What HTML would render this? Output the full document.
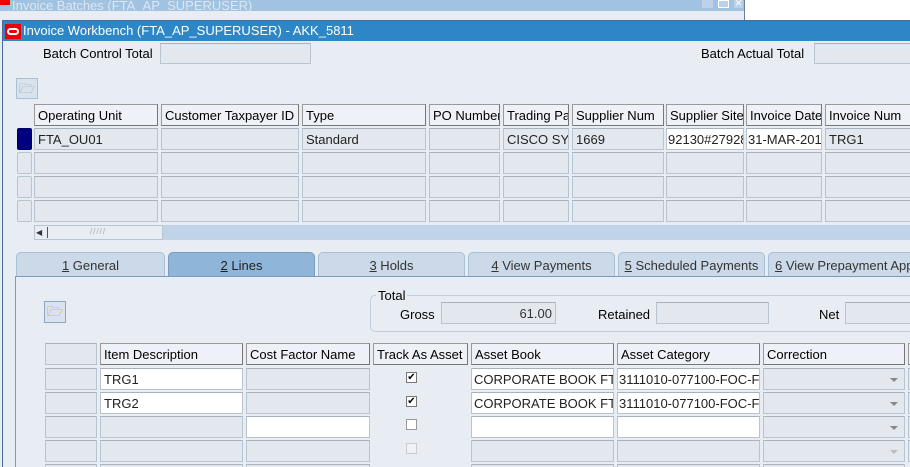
<!DOCTYPE html>
<html style="overflow:hidden;width:910px;height:467px"><head><style>
*{margin:0;padding:0;box-sizing:border-box}
body{width:910px;height:467px;overflow:hidden;background:#e8edf4;font-family:"Liberation Sans",sans-serif;font-size:13px;color:#000;position:relative}
div{position:absolute}
.h{background:#eef2f8;border:1px solid #9a9a9a;border-right-color:#777;border-bottom-color:#777;padding:3px 0 0 3px;white-space:nowrap;overflow:hidden;height:22px}
.f{background:#e3e8ef;border:1px solid #b8c4d0;border-top-color:#a7b2bd;height:22px;padding:3px 0 0 3px;white-space:nowrap;overflow:hidden;color:#222}
.w{background:#fff}
.tab{top:252px;height:24px;background:#cbd9e8;border:1px solid #a9bfd6;border-bottom:none;border-radius:5px 5px 0 0;text-align:center;padding-top:5px;color:#333;white-space:nowrap;overflow:hidden}
.ri{left:17px;width:15px;height:22px;border:1px solid #b8c4d0;background:#e3e8ef;border-radius:2px}
.cb{width:11px;height:11px;border:1px solid #777;background:#fff;font-size:10px;line-height:9px;text-align:center}
.dd{position:absolute;right:6px;top:9px;width:0;height:0;border-left:4px solid transparent;border-right:4px solid transparent;border-top:4px solid #888}
</style></head><body>
<div style="left:0;top:0;width:744px;height:11px;background:#a1c2e0;color:#dbe7f3;font-size:13px;line-height:11px;padding-left:12px;overflow:hidden">Invoice Batches (FTA_AP_SUPERUSER)</div>
<div style="left:0;top:0;width:10px;height:5px;background:#e00"></div>
<div style="left:744px;top:0;width:166px;height:20px;background:#fff;border-left:1px solid #6a7f99"></div>
<div style="left:702px;top:0;width:11px;height:8px;background:#bcd2e8"></div>
<div style="left:718px;top:0;width:11px;height:8px;background:#bcd2e8;border:1px solid #fff"></div>
<div style="left:734px;top:0;width:9px;height:8px;background:#bcd2e8;color:#fff;font-size:9px;line-height:7px;text-align:center">✕</div>
<div style="left:2px;top:20px;width:908px;height:447px;border-left:1px solid #4a6a99;border-top:1px solid #4a6a99"></div>
<div style="left:3px;top:21px;width:907px;height:20px;background:#2d86c5;color:#fff;font-size:13px;line-height:20px;padding-left:20px">Invoice Workbench (FTA_AP_SUPERUSER) - AKK_5811</div>
<div style="left:5px;top:24px;width:16px;height:15px;background:#e00;"><div style="left:2px;top:4px;width:12px;height:7px;border:2px solid #fff;border-radius:4px"></div></div>

<div style="left:43px;top:46px">Batch Control Total</div>
<div class="f" style="left:160px;top:43px;width:151px;height:21px"></div>
<div style="left:701px;top:46px">Batch Actual Total</div>
<div class="f" style="left:814px;top:43px;width:100px;height:21px"></div>

<div style="left:16px;top:78px;width:22px;height:21px;border:1px solid #a9bfd6;background:#d9e3ee;color:#999;font-size:13px;text-align:center;line-height:19px">🗁</div>

<div class="h" style="left:34px;top:104px;width:124px">Operating Unit</div>
<div class="h" style="left:161px;top:104px;width:138px">Customer Taxpayer ID</div>
<div class="h" style="left:302px;top:104px;width:124px">Type</div>
<div class="h" style="left:429px;top:104px;width:71px">PO Number</div>
<div class="h" style="left:503px;top:104px;width:66px">Trading Partner</div>
<div class="h" style="left:572px;top:104px;width:92px">Supplier Num</div>
<div class="h" style="left:666px;top:104px;width:78px">Supplier Site</div>
<div class="h" style="left:746px;top:104px;width:76px">Invoice Date</div>
<div class="h" style="left:825px;top:104px;width:86px">Invoice Num</div>

<div class="ri" style="top:128px;background:#000080;border-color:#000060"></div>
<div class="ri" style="top:152px"></div>
<div class="ri" style="top:176px"></div>
<div class="ri" style="top:200px"></div>

<div class="f" style="left:34px;top:128px;width:124px">FTA_OU01</div>
<div class="f" style="left:161px;top:128px;width:138px"></div>
<div class="f" style="left:302px;top:128px;width:124px">Standard</div>
<div class="f" style="left:429px;top:128px;width:71px"></div>
<div class="f" style="left:503px;top:128px;width:66px">CISCO SYSTEMS</div>
<div class="f" style="left:572px;top:128px;width:92px">1669</div>
<div class="f w" style="left:666px;top:128px;width:78px;padding-left:1px">92130#27928</div>
<div class="f w" style="left:746px;top:128px;width:76px;padding-left:1px">31-MAR-2015</div>
<div class="f" style="left:825px;top:128px;width:86px">TRG1</div>

<div class="f" style="left:34px;top:152px;width:124px"></div><div class="f" style="left:161px;top:152px;width:138px"></div><div class="f" style="left:302px;top:152px;width:124px"></div><div class="f" style="left:429px;top:152px;width:71px"></div><div class="f" style="left:503px;top:152px;width:66px"></div><div class="f" style="left:572px;top:152px;width:92px"></div><div class="f" style="left:666px;top:152px;width:78px"></div><div class="f" style="left:746px;top:152px;width:76px"></div><div class="f" style="left:825px;top:152px;width:86px"></div>
<div class="f" style="left:34px;top:176px;width:124px"></div><div class="f" style="left:161px;top:176px;width:138px"></div><div class="f" style="left:302px;top:176px;width:124px"></div><div class="f" style="left:429px;top:176px;width:71px"></div><div class="f" style="left:503px;top:176px;width:66px"></div><div class="f" style="left:572px;top:176px;width:92px"></div><div class="f" style="left:666px;top:176px;width:78px"></div><div class="f" style="left:746px;top:176px;width:76px"></div><div class="f" style="left:825px;top:176px;width:86px"></div>
<div class="f" style="left:34px;top:200px;width:124px"></div><div class="f" style="left:161px;top:200px;width:138px"></div><div class="f" style="left:302px;top:200px;width:124px"></div><div class="f" style="left:429px;top:200px;width:71px"></div><div class="f" style="left:503px;top:200px;width:66px"></div><div class="f" style="left:572px;top:200px;width:92px"></div><div class="f" style="left:666px;top:200px;width:78px"></div><div class="f" style="left:746px;top:200px;width:76px"></div><div class="f" style="left:825px;top:200px;width:86px"></div>

<div style="left:34px;top:225px;width:876px;height:15px;background:#c1d3e6"></div>
<div style="left:34px;top:225px;width:129px;height:15px;background:#e8edf4;border:1px solid #b8c4d0"></div>
<div style="left:36px;top:227px;width:12px;height:11px;border-right:1px solid #555;font-size:8px;line-height:11px;color:#333">◀</div>
<div style="left:90px;top:227px;font-size:8px;color:#aaa;letter-spacing:1px">/////</div>

<div class="tab" style="left:16px;width:149px"><u>1</u> General</div>
<div class="tab" style="left:168px;width:147px;background:#8fb5d8;border-color:#7a9cc0;color:#222"><u>2</u> Lines</div>
<div class="tab" style="left:318px;width:147px"><u>3</u> Holds</div>
<div class="tab" style="left:468px;width:147px"><u>4</u> View Payments</div>
<div class="tab" style="left:618px;width:147px"><u>5</u> Scheduled Payments</div>
<div class="tab" style="left:768px;width:150px;text-align:left;padding-left:6px"><u>6</u> View Prepayment Applications</div>
<div style="left:15px;top:276px;width:895px;height:191px;border-left:1px solid #7a9cc0;border-top:1px solid #7a9cc0"></div>

<div style="left:44px;top:301px;width:22px;height:22px;border:1px solid #8fa6bf;background:#d9e3ee;font-size:13px;text-align:center;line-height:19px;color:#c9a400">🗁</div>

<div style="left:370px;top:295px;width:545px;height:37px;border:1px solid #c0cedd;border-radius:5px"></div>
<div style="left:376px;top:288px;background:#e8edf4;padding:0 2px">Total</div>
<div style="left:400px;top:307px">Gross</div>
<div class="f" style="left:441px;top:302px;width:115px;text-align:right;padding-right:3px;color:#333">61.00</div>
<div style="left:598px;top:307px">Retained</div>
<div class="f" style="left:656px;top:302px;width:113px"></div>
<div style="left:819px;top:307px">Net</div>
<div class="f" style="left:845px;top:302px;width:70px"></div>

<div class="f" style="left:45px;top:343px;width:52px"></div>
<div class="h" style="left:100px;top:343px;width:143px">Item Description</div>
<div class="h" style="left:246px;top:343px;width:124px">Cost Factor Name</div>
<div class="h" style="left:373px;top:343px;width:95px">Track As Asset</div>
<div class="h" style="left:471px;top:343px;width:143px">Asset Book</div>
<div class="h" style="left:617px;top:343px;width:143px">Asset Category</div>
<div class="h" style="left:763px;top:343px;width:142px">Correction</div>
<div class="h" style="left:908px;top:343px;width:10px"></div>

<div class="f" style="left:45px;top:368px;width:52px"></div>
<div class="f w" style="left:100px;top:368px;width:143px">TRG1</div>
<div class="f" style="left:246px;top:368px;width:124px"></div>
<div class="cb" style="left:406px;top:372px">✔</div>
<div class="f w" style="left:471px;top:368px;width:143px;padding-left:2px">CORPORATE BOOK FTA</div>
<div class="f w" style="left:617px;top:368px;width:143px;padding-left:1px">3111010-077100-FOC-FTA</div>
<div class="f" style="left:763px;top:368px;width:142px"><span class="dd"></span></div>
<div class="f" style="left:908px;top:368px;width:10px"></div>

<div class="f" style="left:45px;top:392px;width:52px"></div>
<div class="f w" style="left:100px;top:392px;width:143px">TRG2</div>
<div class="f" style="left:246px;top:392px;width:124px"></div>
<div class="cb" style="left:406px;top:396px">✔</div>
<div class="f w" style="left:471px;top:392px;width:143px;padding-left:2px">CORPORATE BOOK FTA</div>
<div class="f w" style="left:617px;top:392px;width:143px;padding-left:1px">3111010-077100-FOC-FTA</div>
<div class="f" style="left:763px;top:392px;width:142px"><span class="dd"></span></div>
<div class="f" style="left:908px;top:392px;width:10px"></div>

<div class="f" style="left:45px;top:416px;width:52px"></div>
<div class="f" style="left:100px;top:416px;width:143px"></div>
<div class="f w" style="left:246px;top:416px;width:124px"></div>
<div class="cb" style="left:406px;top:419px;border-color:#999"></div>
<div class="f w" style="left:471px;top:416px;width:143px"></div>
<div class="f w" style="left:617px;top:416px;width:143px"></div>
<div class="f" style="left:763px;top:416px;width:142px"><span class="dd"></span></div>
<div class="f" style="left:908px;top:416px;width:10px"></div>

<div class="f" style="left:45px;top:440px;width:52px"></div>
<div class="f" style="left:100px;top:440px;width:143px"></div>
<div class="f" style="left:246px;top:440px;width:124px"></div>
<div class="cb" style="left:406px;top:443px;border-color:#ccc;background:#eef1f5"></div>
<div class="f" style="left:471px;top:440px;width:143px"></div>
<div class="f" style="left:617px;top:440px;width:143px"></div>
<div class="f" style="left:763px;top:440px;width:142px"><span class="dd" style="border-top-color:#bbb"></span></div>
<div class="f" style="left:908px;top:440px;width:10px"></div>

<div class="f" style="left:45px;top:464px;width:52px;height:3px"></div>
<div class="f" style="left:100px;top:464px;width:143px;height:3px"></div>
<div class="f" style="left:246px;top:464px;width:124px;height:3px"></div>
<div class="f" style="left:471px;top:464px;width:143px;height:3px"></div>
<div class="f" style="left:617px;top:464px;width:143px;height:3px"></div>
<div class="f" style="left:763px;top:464px;width:142px;height:3px"></div>
</body></html>
